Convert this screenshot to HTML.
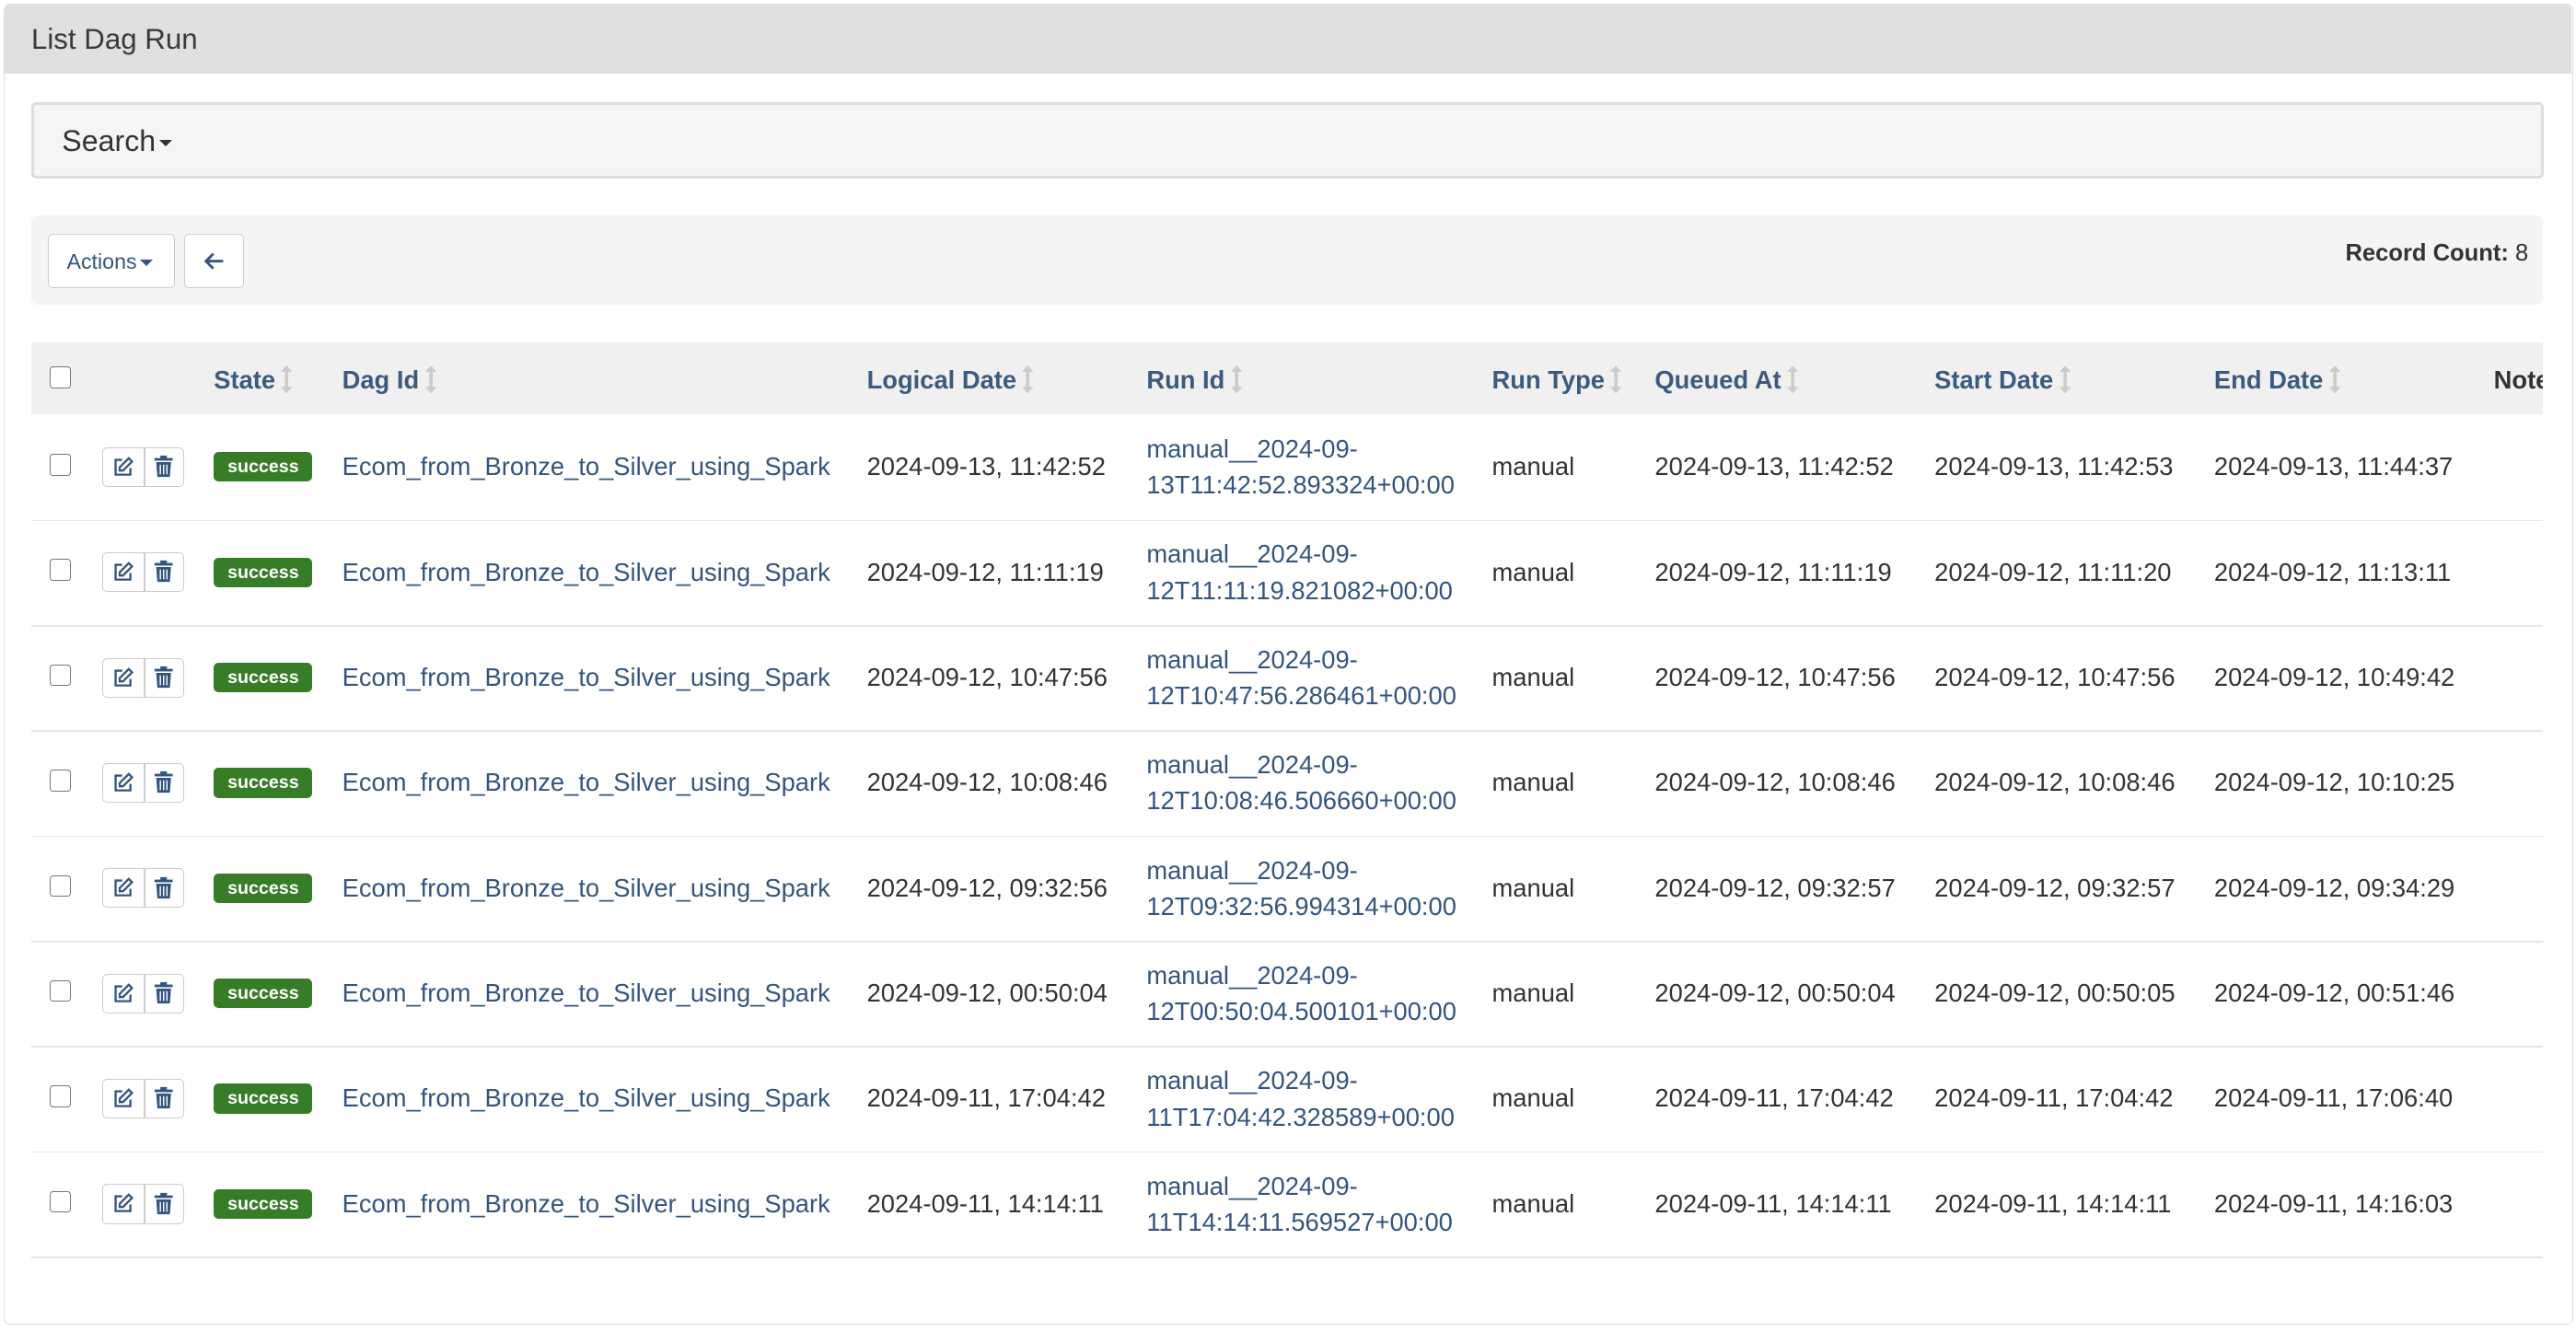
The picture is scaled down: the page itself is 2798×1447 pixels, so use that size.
<!DOCTYPE html>
<html><head><meta charset="utf-8">
<style>
html,body{margin:0;padding:0;background:#fff;}
body{width:2798px;height:1447px;overflow:hidden;}
#w{zoom:1.78672;width:1566px;height:810px;position:relative;font-family:"Liberation Sans",Arial,sans-serif;color:#333;}
.abs{position:absolute;}
.panel{left:2px;top:2px;width:1561px;height:802px;border:1px solid #ddd;border-radius:4px;}
.head{left:3px;top:3px;width:1560px;height:42px;background:#e0e0e0;border-radius:3px 3px 0 0;}
.title{left:19px;top:14px;font-size:17.5px;color:#3a3a3a;}
.search{left:19px;top:62px;width:1524px;height:43px;background:#f5f5f5;border:2px solid #ddd;border-radius:3px;}
.stxt{position:absolute;left:17px;top:12px;font-size:18px;color:#333;}
.caret{display:inline-block;width:0;height:0;border-left:4px solid transparent;border-right:4px solid transparent;border-top:4px solid #333;vertical-align:middle;margin-left:2px;}
.tool{left:19px;top:131px;width:1527px;height:54px;background:#f4f4f4;border-radius:4px;}
.btn{background:#fff;border:1px solid #ccc;border-radius:3px;height:32px;top:142px;}
.rc{right:29px;top:146px;font-size:14.3px;color:#333;}
.clip{left:19px;top:208px;width:1527px;height:560px;overflow:hidden;}
.th{left:0;top:0;width:1527px;height:44px;background:#f0f0f0;}
.h{top:14px;font-size:15.3px;font-weight:bold;color:#3b5a80;white-space:nowrap;}
.s{display:inline-block;vertical-align:-3px;margin-left:3px;}
.cb{width:12px;height:12px;border:1px solid #767676;border-radius:2px;background:#fff;}
.line{left:0;width:1527px;height:1px;background:#e6e6e6;}
.t{font-size:15.3px;white-space:nowrap;color:#333;}
.a{color:#33557f;}
.badge{background:#377d27;color:#fff;font-weight:bold;font-size:11px;border-radius:3px;width:60px;height:18px;line-height:18px;text-align:center;}
.grp{width:49px;height:23px;border:1px solid #ccc;border-radius:3px;background:#fff;}
.grp i{position:absolute;left:25px;top:0;width:1px;height:23px;background:#ccc;}
.rid{font-size:15.3px;line-height:22px;color:#33557f;white-space:nowrap;}
</style></head><body><div id="w">
<div class="abs panel"></div>
<div class="abs head"></div>
<div class="abs title">List Dag Run</div>
<div class="abs search"><span class="stxt">Search<span class="caret"></span></span></div>
<div class="abs tool"></div>
<div class="abs btn" style="left:29px;width:76px;"><span style="position:absolute;left:11px;top:9px;font-size:13px;color:#33557f;">Actions<span class="caret" style="border-top-color:#33557f"></span></span></div>
<div class="abs btn" style="left:112px;width:35px;"><svg style="position:absolute;left:11px;top:10px" width="13" height="12" viewBox="0 0 13 12"><path d="M12 6H2M6 1.5L1.5 6L6 10.5" stroke="#33557f" stroke-width="1.6" fill="none"/></svg></div>
<div class="abs rc"><b>Record Count:</b> 8</div>

<div class="abs clip">
<div class="abs th"></div>
<div class="abs cb" style="left:11px;top:15px"></div>
<div class="abs h" style="left:111px">State<span class="s SI"></span></div>
<div class="abs h" style="left:189px">Dag Id<span class="s SI"></span></div>
<div class="abs h" style="left:508px">Logical Date<span class="s SI"></span></div>
<div class="abs h" style="left:678px">Run Id<span class="s SI"></span></div>
<div class="abs h" style="left:888px">Run Type<span class="s SI"></span></div>
<div class="abs h" style="left:987px">Queued At<span class="s SI"></span></div>
<div class="abs h" style="left:1157px">Start Date<span class="s SI"></span></div>
<div class="abs h" style="left:1327px">End Date<span class="s SI"></span></div>
<div class="abs h" style="left:1497px;color:#333">Note</div>
<div id="rows"></div>
</div>
</div>
<script>
var si='<svg width="8" height="17" viewBox="0 0 8 17"><path d="M4 0L7.5 4H5V13H7.5L4 17L0.5 13H3V4H0.5z" fill="#ccc"/></svg>';
var ss=document.querySelectorAll(".SI");for(var k=0;k<ss.length;k++)ss[k].innerHTML=si;
var d=[
["2024-09-13, 11:42:52","13T11:42:52.893324+00:00","2024-09-13, 11:42:52","2024-09-13, 11:42:53","2024-09-13, 11:44:37"],
["2024-09-12, 11:11:19","12T11:11:19.821082+00:00","2024-09-12, 11:11:19","2024-09-12, 11:11:20","2024-09-12, 11:13:11"],
["2024-09-12, 10:47:56","12T10:47:56.286461+00:00","2024-09-12, 10:47:56","2024-09-12, 10:47:56","2024-09-12, 10:49:42"],
["2024-09-12, 10:08:46","12T10:08:46.506660+00:00","2024-09-12, 10:08:46","2024-09-12, 10:08:46","2024-09-12, 10:10:25"],
["2024-09-12, 09:32:56","12T09:32:56.994314+00:00","2024-09-12, 09:32:57","2024-09-12, 09:32:57","2024-09-12, 09:34:29"],
["2024-09-12, 00:50:04","12T00:50:04.500101+00:00","2024-09-12, 00:50:04","2024-09-12, 00:50:05","2024-09-12, 00:51:46"],
["2024-09-11, 17:04:42","11T17:04:42.328589+00:00","2024-09-11, 17:04:42","2024-09-11, 17:04:42","2024-09-11, 17:06:40"],
["2024-09-11, 14:14:11","11T14:14:11.569527+00:00","2024-09-11, 14:14:11","2024-09-11, 14:14:11","2024-09-11, 14:16:03"]];
var h="";
var edit='<svg style="position:absolute;left:6px;top:5px" width="13" height="13" viewBox="0 0 13 13"><path d="M6 2H2v9h9V7" stroke="#33557f" stroke-width="1.3" fill="none"/><path d="M10 1l2 2-5.5 5.5H4.5V6.5z" stroke="#33557f" stroke-width="1.3" fill="none"/></svg>';
var trash='<svg style="position:absolute;left:31px;top:4px" width="12" height="14" viewBox="0 0 12 14"><rect x="0.5" y="2" width="11" height="1.6" fill="#33557f"/><rect x="4" y="0.5" width="4" height="2" fill="#33557f"/><path d="M1.5 4.5h9l-0.7 9H2.2z" fill="#33557f"/><path d="M4 6v6M6 6v6M8 6v6" stroke="#fff" stroke-width="0.8"/></svg>';
for(var i=0;i<8;i++){var y=44+64*i,c=y+32,r=d[i];
h+='<div class="abs cb" style="left:11px;top:'+(c-8)+'px"></div>';
h+='<div class="abs grp" style="left:43px;top:'+(c-12)+'px"><i></i>'+edit+trash+'</div>';
h+='<div class="abs badge" style="left:111px;top:'+(c-9)+'px">success</div>';
h+='<div class="abs t a" style="left:189px;top:'+(c-9)+'px">Ecom_from_Bronze_to_Silver_using_Spark</div>';
h+='<div class="abs t" style="left:508px;top:'+(c-9)+'px">'+r[0]+'</div>';
h+='<div class="abs rid" style="left:678px;top:'+(c-22)+'px">manual__2024-09-<br>'+r[1]+'</div>';
h+='<div class="abs t" style="left:888px;top:'+(c-9)+'px">manual</div>';
h+='<div class="abs t" style="left:987px;top:'+(c-9)+'px">'+r[2]+'</div>';
h+='<div class="abs t" style="left:1157px;top:'+(c-9)+'px">'+r[3]+'</div>';
h+='<div class="abs t" style="left:1327px;top:'+(c-9)+'px">'+r[4]+'</div>';
h+='<div class="abs line" style="top:'+(y+64)+'px"></div>';}
document.getElementById("rows").innerHTML=h;
</script>
</body></html>
